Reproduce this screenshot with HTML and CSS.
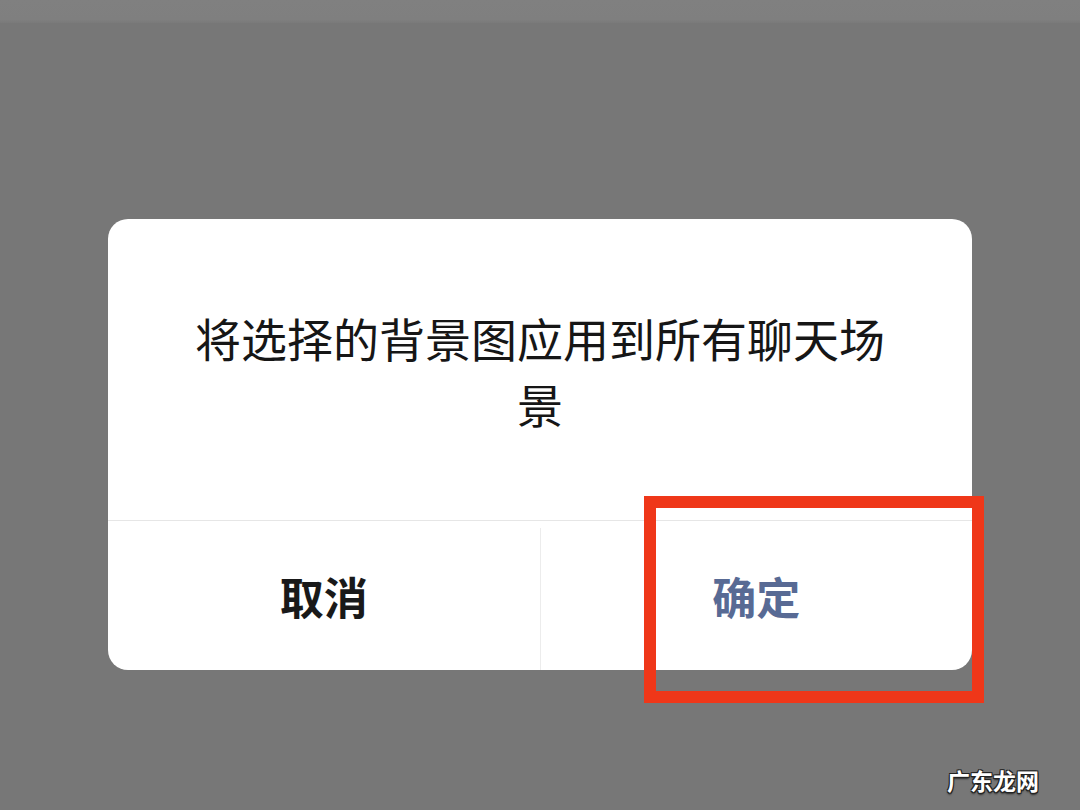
FILE: index.html
```html
<!DOCTYPE html>
<html lang="zh-CN">
<head>
<meta charset="utf-8">
<title>dialog</title>
<link rel="stylesheet" href="styles.css">
</head>
<body>
<div class="screen">
  <div class="statusband"></div>
  <div class="stage">
    <div class="dialog">
      <div class="message">将选择的背景图应用到所有聊天场景</div>
      <div class="actions">
        <div class="btn cancel">取消</div>
        <div class="vline"></div>
        <div class="btn confirm">确定</div>
      </div>
    </div>
  </div>
  <div class="highlight"></div>
  <div class="watermark">广东龙网</div>
</div>
</body>
</html>
```

FILE: styles.css
```css
html, body {
  margin: 0;
  padding: 0;
}
body {
  width: 1080px;
  height: 810px;
  overflow: hidden;
  background: #777777;
  font-family: "Noto Sans CJK SC", "Noto Sans", sans-serif;
}
.screen {
  position: relative;
  width: 1080px;
  height: 810px;
  background: #777777;
}
.statusband {
  height: 23px;
  background: linear-gradient(#808080, #7f7f7f 85%, #7a7a7a);
}
.stage {
  padding: 196px 0 0 108px;
}
.dialog {
  width: 864px;
  height: 451px;
  background: #ffffff;
  border-radius: 20px;
  display: flex;
  flex-direction: column;
  overflow: hidden;
}
.message {
  flex: none;
  padding: 85px 80px 0;
  height: 302px;
  box-sizing: border-box;
  font-size: 46px;
  line-height: 66px;
  font-weight: 400;
  color: #161616;
  text-align: center;
  border-bottom: 1px solid #e6e6e6;
}
.actions {
  flex: 1;
  display: flex;
}
.btn {
  flex: 1;
  display: flex;
  align-items: center;
  justify-content: center;
  font-size: 44px;
  font-weight: 700;
}
.cancel {
  color: #191919;
}
.confirm {
  color: #586a94;
}
.vline {
  width: 1px;
  margin-top: 7px;
  background: #ececec;
}
.highlight {
  position: absolute;
  left: 644px;
  top: 496px;
  width: 340px;
  height: 207px;
  box-sizing: border-box;
  border: 12px solid #ef3719;
}
.watermark {
  position: absolute;
  left: 947px;
  top: 763px;
  font-size: 23px;
  line-height: 34px;
  font-weight: 700;
  color: #ffffff;
  text-shadow: -1px -1px 0 #222, 1px -1px 0 #222, -1px 1px 0 #222, 1px 1px 0 #222, 0 2px 2px #222;
}
```
